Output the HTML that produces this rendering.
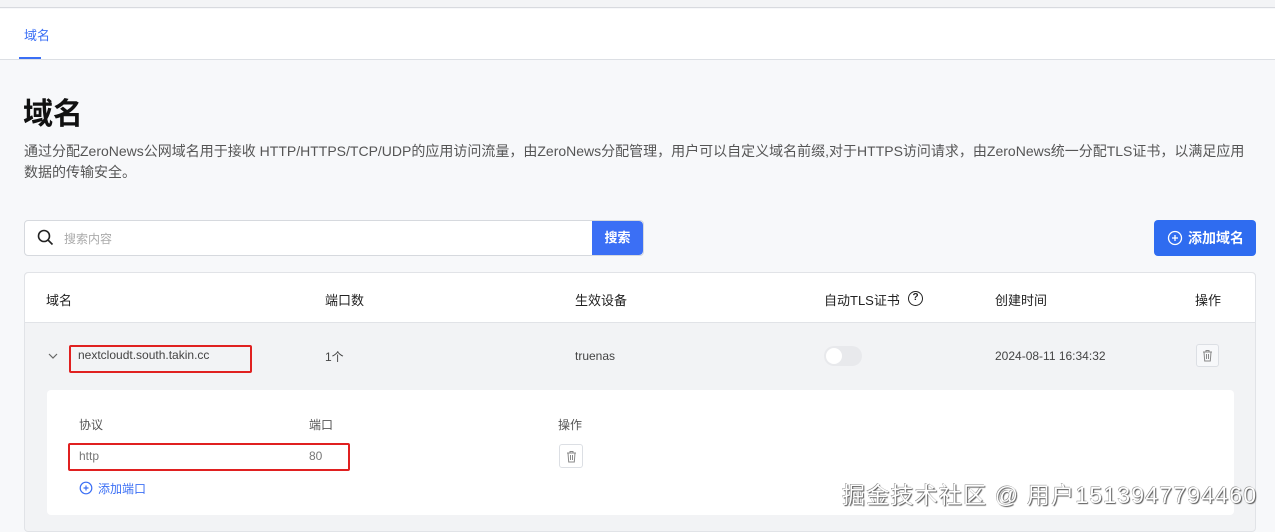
<!DOCTYPE html>
<html><head><meta charset="utf-8"><style>
*{margin:0;padding:0;box-sizing:border-box}
body{width:1275px;height:522px;overflow:hidden;background:#f7f8fa;font-family:"Liberation Sans","Noto Sans CJK SC",sans-serif;position:relative;color:#222}
.a{position:absolute;white-space:nowrap}
</style></head><body>
<div class="a" style="left:0;top:0;width:1275px;height:8px;background:#f3f4f6;border-bottom:1px solid #d8dadf"></div>
<div class="a" style="left:0;top:9px;width:1275px;height:51px;background:#fff;border-bottom:1px solid #dcdfe4"></div>
<div class="a" style="left:24px;top:25px;font-size:13px;color:#3b6ff5">域名</div>
<div class="a" style="left:19px;top:57px;width:22px;height:2px;background:#3b6ff5"></div>
<div class="a" style="left:23px;top:89px;font-size:30px;font-weight:bold;color:#111">域名</div>
<div class="a" style="left:24px;top:141px;font-size:14px;color:#555;line-height:21px">通过分配ZeroNews公网域名用于接收 HTTP/HTTPS/TCP/UDP的应用访问流量，由ZeroNews分配管理，用户可以自定义域名前缀,对于HTTPS访问请求，由ZeroNews统一分配TLS证书，以满足应用<br>数据的传输安全。</div>
<div class="a" style="left:24px;top:220px;width:620px;height:36px;background:#fff;border:1px solid #d6d9de;border-radius:4px"></div>
<svg class="a" style="left:37px;top:229px" width="17" height="17" viewBox="0 0 17 17"><circle cx="7" cy="7" r="5.5" fill="none" stroke="#222" stroke-width="1.6"/><path d="M11 11l4.5 4.5" stroke="#222" stroke-width="1.6"/></svg>
<div class="a" style="left:64px;top:230px;font-size:12px;color:#aaa">搜索内容</div>
<div class="a" style="left:592px;top:221px;width:51px;height:34px;background:#3b6ff5;color:#fff;font-size:13px;font-weight:bold;text-align:center;line-height:34px;border-radius:0 4px 4px 0">搜索</div>
<div class="a" style="left:1154px;top:220px;width:102px;height:36px;background:#2f6cf0;border-radius:4px;color:#fff;font-size:14px;font-weight:bold;line-height:36px;padding-left:34px">添加域名</div>
<svg class="a" style="left:1167px;top:230px" width="16" height="16"><circle cx="8" cy="8" r="6.5" fill="none" stroke="#fff" stroke-width="1.3"/><path d="M8 5v6M5 8h6" stroke="#fff" stroke-width="1.3"/></svg>
<div class="a" style="left:24px;top:272px;width:1232px;height:260px;background:#f2f3f5;border:1px solid #e1e3e7;border-radius:4px"></div>
<div class="a" style="left:25px;top:273px;width:1230px;height:50px;background:#fff;border-bottom:1px solid #e1e3e7;border-radius:4px 4px 0 0"></div>
<div class="a" style="top:290px;left:46px;font-size:13px;color:#222">域名</div>
<div class="a" style="top:290px;left:325px;font-size:13px">端口数</div>
<div class="a" style="top:290px;left:575px;font-size:13px">生效设备</div>
<div class="a" style="top:290px;left:824px;font-size:13px">自动TLS证书</div>
<div class="a" style="left:908px;top:291px;width:15px;height:15px;border:1.5px solid #222;border-radius:50%;font-size:10px;font-weight:bold;text-align:center;line-height:12px">?</div>
<div class="a" style="top:290px;left:995px;font-size:13px">创建时间</div>
<div class="a" style="top:290px;left:1195px;font-size:13px">操作</div>
<svg class="a" style="left:48px;top:352px" width="10" height="8"><path d="M1 2l4 4 4-4" fill="none" stroke="#666" stroke-width="1.2"/></svg>
<div class="a" style="left:78px;top:348px;font-size:12px;color:#444">nextcloudt.south.takin.cc</div>
<div class="a" style="left:69px;top:345px;width:183px;height:28px;border:2px solid #e02020;border-radius:2px"></div>
<div class="a" style="left:325px;top:348px;font-size:12px;color:#444">1个</div>
<div class="a" style="left:575px;top:349px;font-size:12px;color:#444">truenas</div>
<div class="a" style="left:824px;top:346px;width:38px;height:20px;background:#e8e9ec;border-radius:10px"></div>
<div class="a" style="left:826px;top:348px;width:16px;height:16px;background:#fff;border-radius:50%"></div>
<div class="a" style="left:995px;top:349px;font-size:12px;color:#444">2024-08-11 16:34:32</div>
<div class="a" style="left:1196px;top:344px;width:23px;height:23px;border:1px solid #dcdfe4;border-radius:3px;background:#f7f8fa"></div>
<svg class="a" style="left:1202px;top:349px" width="11" height="13"><path d="M1 3h9M4 3V1.5h3V3M2 3l.7 9h5.6L9 3M4.5 5v5M6.5 5v5" fill="none" stroke="#888" stroke-width="1"/></svg>
<div class="a" style="left:47px;top:390px;width:1187px;height:125px;background:#fff;border-radius:4px"></div>
<div class="a" style="left:79px;top:416px;font-size:12px;color:#555">协议</div>
<div class="a" style="left:309px;top:416px;font-size:12px;color:#555">端口</div>
<div class="a" style="left:558px;top:416px;font-size:12px;color:#555">操作</div>
<div class="a" style="left:79px;top:449px;font-size:12px;color:#777">http</div>
<div class="a" style="left:309px;top:449px;font-size:12px;color:#777">80</div>
<div class="a" style="left:68px;top:443px;width:282px;height:28px;border:2px solid #e02020;border-radius:2px"></div>
<div class="a" style="left:559px;top:444px;width:24px;height:24px;border:1px solid #dcdfe4;border-radius:3px"></div>
<svg class="a" style="left:566px;top:450px" width="11" height="13"><path d="M1 3h9M4 3V1.5h3V3M2 3l.7 9h5.6L9 3M4.5 5v5M6.5 5v5" fill="none" stroke="#888" stroke-width="1"/></svg>
<svg class="a" style="left:79px;top:481px" width="14" height="14"><circle cx="7" cy="7" r="5.8" fill="none" stroke="#3b6ff5" stroke-width="1.2"/><path d="M7 4.5v5M4.5 7h5" stroke="#3b6ff5" stroke-width="1.2"/></svg>
<div class="a" style="left:98px;top:480px;font-size:12px;color:#3b6ff5">添加端口</div>
<div class="a" style="left:842px;top:476px;font-size:23px;letter-spacing:1.2px;color:#fff;text-shadow:1px 1px 1px #555,-0.5px -0.5px 0 #888">掘金技术社区 @ 用户1513947794460</div>
</body></html>
